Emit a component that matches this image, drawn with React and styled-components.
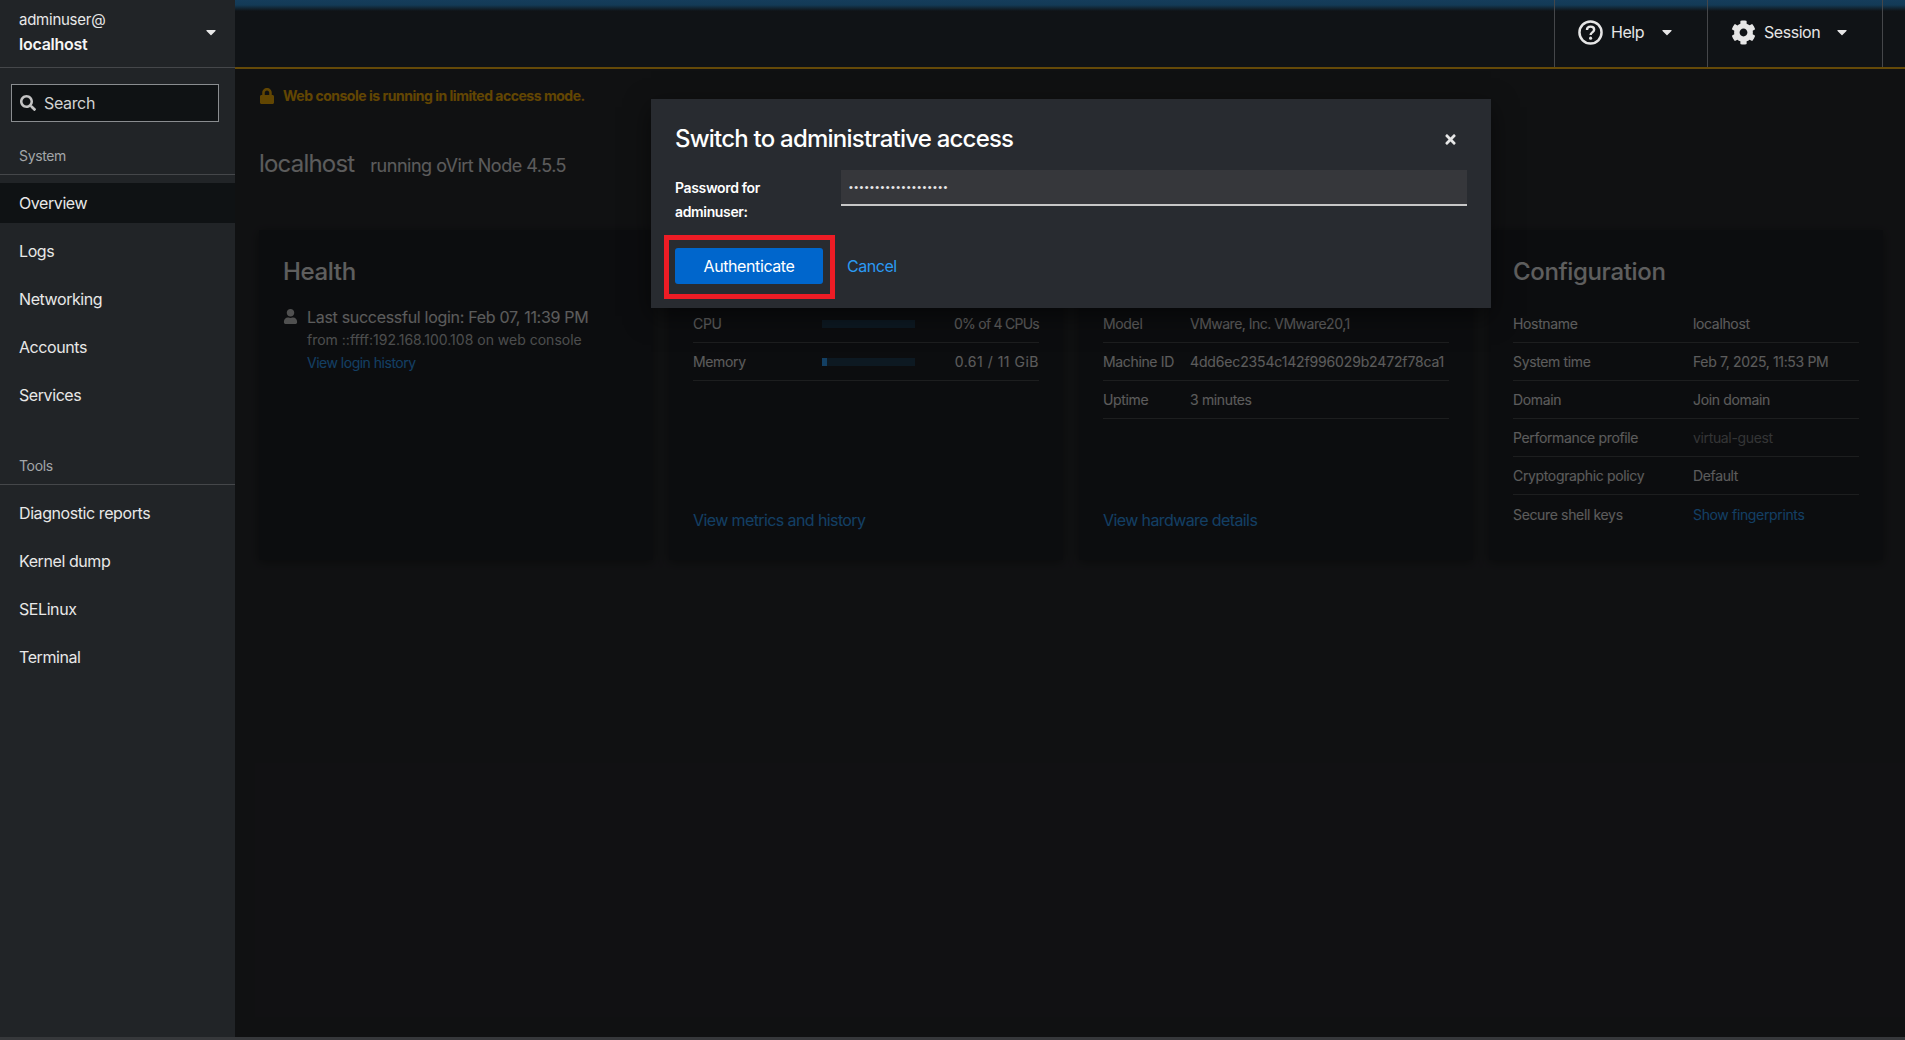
import React from "react";
import styled, { createGlobalStyle } from "styled-components";
import {
  FaCaretDown,
  FaCog,
  FaLock,
  FaSearch,
  FaTimes,
  FaUser,
} from "react-icons/fa";

const systemItems = ["Overview", "Logs", "Networking", "Accounts", "Services"];
const toolItems = ["Diagnostic reports", "Kernel dump", "SELinux", "Terminal"];

const hardware = [
  ["Model", "VMware, Inc. VMware20,1", "narrow"],
  ["Machine ID", "4dd6ec2354c142f996029b2472f78ca1", "hash"],
  ["Uptime", "3 minutes"],
];

const config = [
  ["Hostname", "localhost"],
  ["System time", "Feb 7, 2025, 11:53 PM"],
  ["Domain", "Join domain"],
  ["Performance profile", "virtual-guest", "muted"],
  ["Cryptographic policy", "Default"],
  ["Secure shell keys", "Show fingerprints", "link"],
];

function App() {
  return (
    <>
      <GlobalStyle />
      <Shell>
        <Sidebar>
          <HostSwitcher>
            <HostName>
              <span>adminuser@</span>
              <strong>localhost</strong>
            </HostName>
            <FaCaretDown size={16} />
          </HostSwitcher>
          <SearchBox>
            <FaSearch size={16} />
            <span>Search</span>
          </SearchBox>
          <SectionTitle>System</SectionTitle>
          <NavList>
            {systemItems.map((item) => (
              <NavItem key={item} $active={item === "Overview"}>
                {item}
              </NavItem>
            ))}
          </NavList>
          <SectionTitle $gap={40}>Tools</SectionTitle>
          <NavList>
            {toolItems.map((item) => (
              <NavItem key={item}>{item}</NavItem>
            ))}
          </NavList>
        </Sidebar>

        <Main>
          <TopBar>
            <TopButton $width={153}>
              <HelpIcon />
              <TopLabel>Help</TopLabel>
              <FaCaretDown size={16} />
            </TopButton>
            <TopButton $width={175}>
              <FaCog size={25} />
              <TopLabel>Session</TopLabel>
              <FaCaretDown size={16} />
            </TopButton>
            <TopEnd />
          </TopBar>

          <Content>
            <PageHeader>
              <LimitedAccess>
                <FaLock size={16} />
                Web console is running in limited access mode.
              </LimitedAccess>
              <TitleRow>
                <HostTitle>localhost</HostTitle>
                <HostSub>running oVirt Node 4.5.5</HostSub>
              </TitleRow>
            </PageHeader>

            <CardGrid>
              <Card>
                <CardTitle>Health</CardTitle>
                <LoginRow>
                  <FaUser size={14} />
                  <LoginText>
                    <span>Last successful login: Feb 07, 11:39 PM</span>
                    <LoginFrom>from ::ffff:192.168.100.108 on web console</LoginFrom>
                    <SmallLink>View login history</SmallLink>
                  </LoginText>
                </LoginRow>
              </Card>

              <Card>
                <CardTitle />
                <Rows>
                  <UsageRow>
                    <span>CPU</span>
                    <Bar />
                    <UsageValue $track={-0.75}>0% of 4 CPUs</UsageValue>
                  </UsageRow>
                  <UsageRow>
                    <span>Memory</span>
                    <Bar>
                      <BarFill style={{ width: `${(0.61 / 11) * 100}%` }} />
                    </Bar>
                    <UsageValue $track={0.5}>0.61 / 11 GiB</UsageValue>
                  </UsageRow>
                </Rows>
                <CardLink>View metrics and history</CardLink>
              </Card>

              <Card>
                <CardTitle />
                <Rows>
                  {hardware.map(([key, value, kind]) => (
                    <InfoRow key={key} $keyWidth={87}>
                      <span>{key}</span>
                      <InfoValue $kind={kind}>{value}</InfoValue>
                    </InfoRow>
                  ))}
                </Rows>
                <CardLink>View hardware details</CardLink>
              </Card>

              <Card>
                <CardTitle>Configuration</CardTitle>
                <Rows>
                  {config.map(([key, value, kind]) => (
                    <InfoRow key={key} $keyWidth={180}>
                      <span>{key}</span>
                      <InfoValue $kind={kind}>{value}</InfoValue>
                    </InfoRow>
                  ))}
                </Rows>
              </Card>
            </CardGrid>

            <Backdrop />
            <Dialog>
              <DialogHead>
                <DialogTitle>Switch to administrative access</DialogTitle>
                <CloseButton>
                  <FaTimes size={15} />
                </CloseButton>
              </DialogHead>
              <DialogForm>
                <PasswordLabel>Password for adminuser:</PasswordLabel>
                <PasswordInput type="password" value="aaaaaaaaaaaaaaaaaaa" readOnly />
              </DialogForm>
              <DialogActions>
                <PrimaryWrap>
                  <PrimaryButton>Authenticate</PrimaryButton>
                  <RedMark />
                </PrimaryWrap>
                <CancelLink>Cancel</CancelLink>
              </DialogActions>
            </Dialog>
          </Content>
        </Main>
      </Shell>
    </>
  );
}

function HelpIcon() {
  return (
    <svg width="25" height="25" viewBox="0 0 24 24" fill="none">
      <circle cx="12" cy="12" r="10.6" stroke="currentColor" strokeWidth="2.4" />
      <path
        d="M8.6 9.6c0-2 1.5-3.2 3.5-3.2 2 0 3.4 1.2 3.4 2.9 0 2.5-3.4 2.6-3.4 5"
        stroke="currentColor"
        strokeWidth="2.3"
      />
      <circle cx="12.1" cy="17.4" r="1.5" fill="currentColor" />
    </svg>
  );
}

export default App;

const GlobalStyle = createGlobalStyle`
  * {
    box-sizing: border-box;
  }

  body {
    margin: 0;
    height: 1040px;
    overflow: hidden;
    background: #36383b;
    font-family: "Inter", "Liberation Sans", sans-serif;
    letter-spacing: -0.35px;
    color: #e0e0e0;
  }
`;

const Shell = styled.div`
  display: grid;
  grid-template-columns: 235px 1fr;
  height: 1037px;
`;

const Sidebar = styled.aside`
  background: #212427;
  color: #e8e8e8;
`;

const HostSwitcher = styled.div`
  height: 68px;
  padding: 6px 16px 10px 19px;
  display: flex;
  align-items: center;
  justify-content: space-between;
  border-bottom: 1px solid #45474a;
`;

const HostName = styled.div`
  display: flex;
  flex-direction: column;
  font-size: 15px;
  line-height: 24px;
  letter-spacing: -0.25px;

  strong {
    font-size: 16px;
    font-weight: 600;
    color: #f5f5f5;
  }
`;

const SearchBox = styled.div`
  margin: 16px 16px 0 11px;
  height: 38px;
  padding: 0 8px;
  display: flex;
  align-items: center;
  gap: 8px;
  background: #0f1214;
  border: 1px solid #8a8d90;
  font-size: 16px;
  color: #d2d2d2;

  svg {
    color: #c4c4c4;
  }
`;

const SectionTitle = styled.div`
  margin-top: ${(props) => props.$gap || 23}px;
  padding: 0 19px 8px;
  font-size: 14px;
  line-height: 21px;
  color: #a3a6a9;
  border-bottom: 1px solid #45474a;
`;

const NavList = styled.nav`
  padding-top: 8px;
  display: flex;
  flex-direction: column;
  gap: 8px;
`;

const NavItem = styled.a`
  height: 40px;
  padding: 0 19px;
  display: flex;
  align-items: center;
  font-size: 16px;
  letter-spacing: -0.42px;
  background: ${(props) => (props.$active ? "#0f1214" : "transparent")};
`;

const Main = styled.main`
  display: flex;
  flex-direction: column;
  min-width: 0;
`;

const TopBar = styled.header`
  height: 69px;
  display: flex;
  justify-content: flex-end;
  background: linear-gradient(#153d5b 0, #133a56 5px, #101316 11px);
  border-bottom: 2px solid #654a08;
`;

const TopButton = styled.div`
  width: ${(props) => props.$width}px;
  padding: 0 32px 3px 23px;
  display: flex;
  align-items: center;
  border-left: 1px solid #45474a;
  color: #e6e6e6;
  font-size: 16px;

  svg:last-child {
    margin-left: auto;
  }
`;

const TopLabel = styled.span`
  margin-left: 8px;
  letter-spacing: -0.45px;
`;

const TopEnd = styled.div`
  width: 23px;
  border-left: 1px solid #45474a;
`;

const Content = styled.div`
  position: relative;
  flex: 1;
  background: #25272a;
`;

const PageHeader = styled.section`
  height: 137px;
  padding: 16px 24px 0;
`;

const LimitedAccess = styled.div`
  display: flex;
  align-items: center;
  gap: 8px;
  font-size: 14px;
  line-height: 21px;
  font-weight: 700;
  letter-spacing: -0.48px;
  color: #f0ab00;
`;

const TitleRow = styled.div`
  margin-top: 40px;
  display: flex;
  align-items: baseline;
  gap: 16px;
`;

const HostTitle = styled.h1`
  margin: 0;
  font-size: 24px;
  line-height: 36px;
  font-weight: 400;
  letter-spacing: -0.8px;
`;

const HostSub = styled.span`
  font-size: 18px;
  letter-spacing: -0.5px;
`;

const CardGrid = styled.div`
  display: grid;
  grid-template-columns: repeat(4, 1fr);
  gap: 16px;
  padding: 24px 22px 0 24px;
`;

const Card = styled.article`
  height: 330px;
  padding: 24px 24px 28px;
  display: flex;
  flex-direction: column;
  background: #1b1d21;
  box-shadow: 0 2px 10px rgba(0, 0, 0, 0.45);
`;

const CardTitle = styled.h2`
  margin: 0 0 15px;
  min-height: 36px;
  font-size: 24px;
  line-height: 36px;
  font-weight: 500;
  letter-spacing: -0.35px;
  color: #e6e6e6;
`;

const LoginRow = styled.div`
  display: flex;
  gap: 9px;
  font-size: 16px;
  line-height: 24px;
  letter-spacing: -0.3px;

  svg {
    margin-top: 4px;
    width: 15px;
    height: 15px;
    flex: none;
    color: #c4c4c4;
  }
`;

const LoginText = styled.div`
  display: flex;
  flex-direction: column;
`;

const LoginFrom = styled.span`
  font-size: 14px;
  line-height: 21px;
  letter-spacing: 0;
  color: #b8bbbe;
`;

const SmallLink = styled.a`
  margin-top: 2px;
  font-size: 14px;
  line-height: 21px;
  letter-spacing: -0.5px;
  color: #2b9af3;
`;

const Rows = styled.div`
  display: flex;
  flex-direction: column;
`;

const RowBase = styled.div`
  height: 38px;
  display: grid;
  align-items: center;
  font-size: 14px;
  border-bottom: 1px solid #45474a;

  &:last-child {
    border-bottom: ${(props) => (props.$keyWidth === 180 ? "none" : "1px solid #45474a")};
  }
`;

const UsageRow = styled(RowBase)`
  grid-template-columns: 129px 93px 1fr;
`;

const UsageValue = styled.span`
  text-align: right;
  letter-spacing: ${(props) => props.$track}px;
`;

const Bar = styled.div`
  height: 8px;
  background: #1c3a52;
`;

const BarFill = styled.div`
  height: 100%;
  background: #2b9af3;
`;

const InfoRow = styled(RowBase)`
  grid-template-columns: ${(props) => props.$keyWidth}px 1fr;
  white-space: nowrap;
`;

const valueTracking = { hash: "-0.15px", narrow: "-0.5px" };

const InfoValue = styled.span`
  letter-spacing: ${(props) => valueTracking[props.$kind] || "inherit"};
  color: ${(props) =>
    props.$kind === "link" ? "#2b9af3" : props.$kind === "muted" ? "#7d7f82" : "inherit"};
`;

const CardLink = styled.a`
  margin-top: auto;
  font-size: 16px;
  line-height: 24px;
  letter-spacing: -0.6px;
  color: #2b9af3;
`;

const Backdrop = styled.div`
  position: absolute;
  inset: 0;
  background: rgba(3, 3, 3, 0.6);
`;

const Dialog = styled.div`
  position: absolute;
  top: 30px;
  left: 416px;
  width: 840px;
  padding: 22px 24px 24px;
  background: #282b30;
  box-shadow: 0 8px 24px rgba(0, 0, 0, 0.5);
`;

const DialogHead = styled.div`
  display: flex;
  align-items: center;
  justify-content: space-between;
  padding-right: 9px;
`;

const DialogTitle = styled.h2`
  margin: 0;
  font-size: 24px;
  line-height: 36px;
  font-weight: 500;
  letter-spacing: -0.78px;
  color: #fff;
`;

const CloseButton = styled.div`
  display: flex;
  color: #e6e6e6;
`;

const DialogForm = styled.div`
  margin-top: 13px;
  display: grid;
  grid-template-columns: 166px 1fr;
  align-items: start;
`;

const PasswordLabel = styled.label`
  max-width: 120px;
  padding-top: 6px;
  font-size: 14px;
  line-height: 24px;
  font-weight: 600;
  color: #fff;
`;

const PasswordInput = styled.input`
  height: 36px;
  padding: 0 8px 1px;
  border: none;
  border-bottom: 2px solid #c7c7c7;
  background: #36373b;
  color: #e8e8e8;
  font-size: 11px;
  letter-spacing: 1.4px;
  outline: none;
`;

const DialogActions = styled.div`
  margin-top: 24px;
  display: flex;
  align-items: center;
  gap: 24px;
`;

const PrimaryWrap = styled.div`
  position: relative;
  display: flex;
`;

const PrimaryButton = styled.button`
  width: 148px;
  height: 36px;
  border: none;
  border-radius: 3px;
  background: #0066cc;
  color: #fff;
  font: inherit;
  font-size: 16px;
  letter-spacing: -0.4px;
`;

const RedMark = styled.div`
  position: absolute;
  inset: -13px -12px -15px -11px;
  border: 5px solid #ee1c25;
  pointer-events: none;
`;

const CancelLink = styled.a`
  font-size: 16px;
  letter-spacing: -0.45px;
  color: #2b9af3;
`;
